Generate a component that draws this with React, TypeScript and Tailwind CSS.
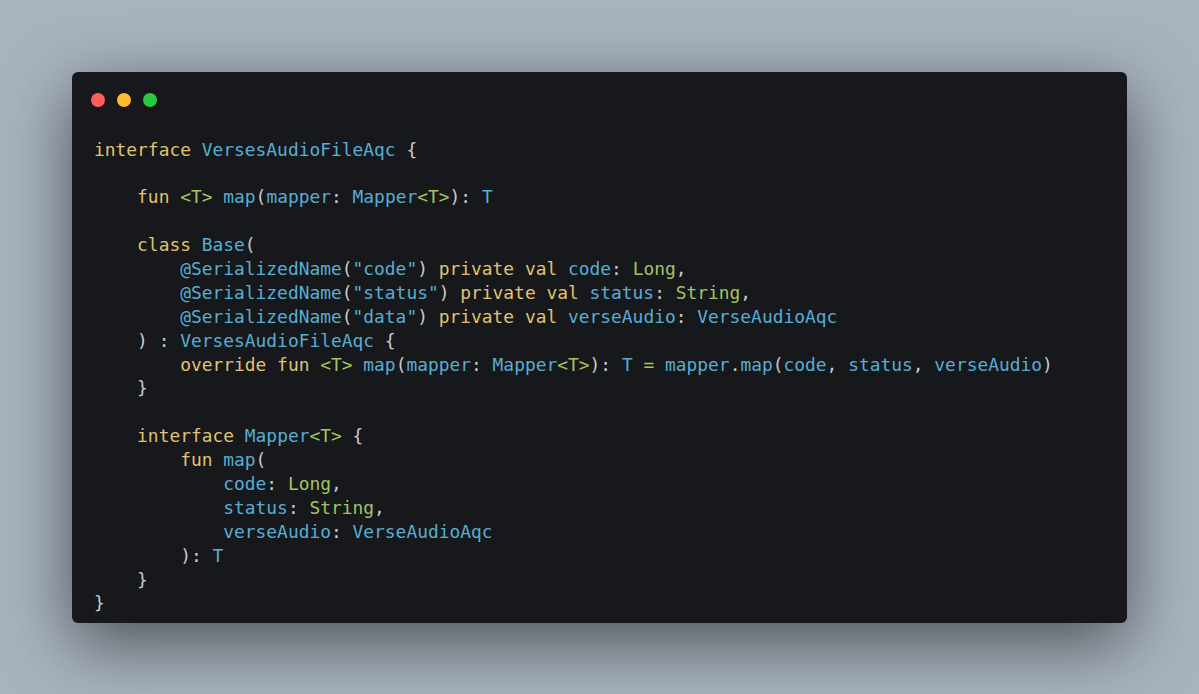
import React from 'react';

type Tok = [string, string];

const K = 'text-[#e0c36f]'; // keywords
const C = 'text-[#56aed4]'; // identifiers / types
const G = 'text-[#a3c461]'; // generics, builtin types
const P = 'text-[#c9cbcf]'; // punctuation

const lines: Tok[][] = [
  [[K, 'interface '], [C, 'VersesAudioFileAqc '], [P, '{']],
  [],
  [[P, '    '], [K, 'fun '], [G, '<T> '], [C, 'map'], [P, '('], [C, 'mapper'], [P, ': '], [C, 'Mapper'], [G, '<T>'], [P, '): '], [C, 'T']],
  [],
  [[P, '    '], [K, 'class '], [C, 'Base'], [P, '(']],
  [[P, '        '], [C, '@SerializedName'], [P, '('], [C, '"code"'], [P, ') '], [K, 'private val '], [C, 'code'], [P, ': '], [G, 'Long'], [P, ',']],
  [[P, '        '], [C, '@SerializedName'], [P, '('], [C, '"status"'], [P, ') '], [K, 'private val '], [C, 'status'], [P, ': '], [G, 'String'], [P, ',']],
  [[P, '        '], [C, '@SerializedName'], [P, '('], [C, '"data"'], [P, ') '], [K, 'private val '], [C, 'verseAudio'], [P, ': '], [C, 'VerseAudioAqc']],
  [[P, '    ) : '], [C, 'VersesAudioFileAqc '], [P, '{']],
  [[P, '        '], [K, 'override fun '], [G, '<T> '], [C, 'map'], [P, '('], [C, 'mapper'], [P, ': '], [C, 'Mapper'], [G, '<T>'], [P, '): '], [C, 'T '], [G, '= '], [C, 'mapper'], [P, '.'], [C, 'map'], [P, '('], [C, 'code'], [P, ', '], [C, 'status'], [P, ', '], [C, 'verseAudio'], [P, ')']],
  [[P, '    }']],
  [],
  [[P, '    '], [K, 'interface '], [C, 'Mapper'], [G, '<T> '], [P, '{']],
  [[P, '        '], [K, 'fun '], [C, 'map'], [P, '(']],
  [[P, '            '], [C, 'code'], [P, ': '], [G, 'Long'], [P, ',']],
  [[P, '            '], [C, 'status'], [P, ': '], [G, 'String'], [P, ',']],
  [[P, '            '], [C, 'verseAudio'], [P, ': '], [C, 'VerseAudioAqc']],
  [[P, '        ): '], [C, 'T']],
  [[P, '    }']],
  [[P, '}']],
];

export default function App() {
  return (
    <div className="min-h-screen w-full bg-[#a8b3be] flex items-center justify-center">
      <div className="w-[1055px] h-[551px] rounded-[6px] bg-[#17181b] shadow-[0_20px_68px_rgba(0,0,0,0.55)] pl-[22px] pt-[21px]">
        {/* window buttons */}
        <div className="flex items-center gap-[12px] -ml-[3px]">
          <span className="w-[14px] h-[14px] rounded-full bg-[#ff5f57]" />
          <span className="w-[14px] h-[14px] rounded-full bg-[#febc2e]" />
          <span className="w-[14px] h-[14px] rounded-full bg-[#28c840]" />
        </div>
        <pre
          className="mt-[31px] text-[17.9px] leading-[23.9px] whitespace-pre"
          style={{ fontFamily: '"DejaVu Sans Mono", "Liberation Mono", monospace' }}
        >
          {lines.map((line, i) => (
            <div key={i} className="h-[23.9px]">
              {line.map(([cls, text], j) => (
                <span key={j} className={cls}>
                  {text}
                </span>
              ))}
            </div>
          ))}
        </pre>
      </div>
    </div>
  );
}
